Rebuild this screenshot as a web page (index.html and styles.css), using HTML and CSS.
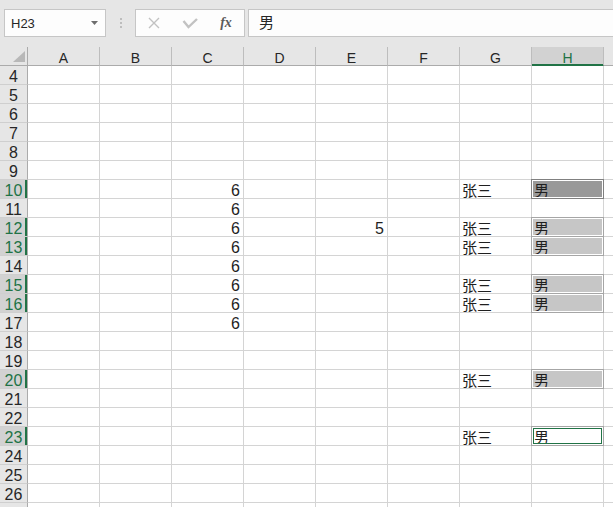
FILE: index.html
```html
<!DOCTYPE html>
<html lang="zh">
  <head>
    <meta charset="UTF-8" />
    <title>Sheet1</title>
    <link rel="stylesheet" href="styles.css">
  </head>
  <body>
    <div class="bar">
      <div class="namebox">
        <span>H23</span>
        <svg class="caret" width="7" height="4"><polygon points="0,0 7,0 3.5,4" /></svg>
      </div>
      <div class="grip"><i></i><i></i><i></i></div>
      <div class="fbtns">
        <span class="slot">
          <svg width="12" height="12"><path d="M1 1 L11 11 M11 1 L1 11" /></svg>
        </span>
        <span class="slot">
          <svg width="16" height="11"><polyline points="1.5,3 6.5,9 15,1" /></svg>
        </span>
        <span class="slot fx">fx</span>
      </div>
      <div class="finput">男</div>
    </div>

    <div class="sheet">
      <div class="row head">
        <div class="corner"><svg width="12" height="11"><polygon points="12,0 12,11 0,11" /></svg></div>
        <div>A</div><div>B</div><div>C</div><div>D</div><div>E</div><div>F</div><div>G</div><div class="on">H</div><div></div>
      </div>
      <div class="row"><div class="rh">4</div><div></div><div></div><div></div><div></div><div></div><div></div><div></div><div></div><div></div></div>
      <div class="row"><div class="rh">5</div><div></div><div></div><div></div><div></div><div></div><div></div><div></div><div></div><div></div></div>
      <div class="row"><div class="rh">6</div><div></div><div></div><div></div><div></div><div></div><div></div><div></div><div></div><div></div></div>
      <div class="row"><div class="rh">7</div><div></div><div></div><div></div><div></div><div></div><div></div><div></div><div></div><div></div></div>
      <div class="row"><div class="rh">8</div><div></div><div></div><div></div><div></div><div></div><div></div><div></div><div></div><div></div></div>
      <div class="row"><div class="rh">9</div><div></div><div></div><div></div><div></div><div></div><div></div><div></div><div></div><div></div></div>
      <div class="row"><div class="rh on">10</div><div></div><div></div><div class="num">6</div><div></div><div></div><div></div><div class="txt">张三</div><div class="txt sel dark">男</div><div></div></div>
      <div class="row"><div class="rh">11</div><div></div><div></div><div class="num">6</div><div></div><div></div><div></div><div></div><div></div><div></div></div>
      <div class="row"><div class="rh on">12</div><div></div><div></div><div class="num">6</div><div></div><div class="num">5</div><div></div><div class="txt">张三</div><div class="txt sel">男</div><div></div></div>
      <div class="row"><div class="rh on">13</div><div></div><div></div><div class="num">6</div><div></div><div></div><div></div><div class="txt">张三</div><div class="txt sel">男</div><div></div></div>
      <div class="row"><div class="rh">14</div><div></div><div></div><div class="num">6</div><div></div><div></div><div></div><div></div><div></div><div></div></div>
      <div class="row"><div class="rh on">15</div><div></div><div></div><div class="num">6</div><div></div><div></div><div></div><div class="txt">张三</div><div class="txt sel">男</div><div></div></div>
      <div class="row"><div class="rh on">16</div><div></div><div></div><div class="num">6</div><div></div><div></div><div></div><div class="txt">张三</div><div class="txt sel">男</div><div></div></div>
      <div class="row"><div class="rh">17</div><div></div><div></div><div class="num">6</div><div></div><div></div><div></div><div></div><div></div><div></div></div>
      <div class="row"><div class="rh">18</div><div></div><div></div><div></div><div></div><div></div><div></div><div></div><div></div><div></div></div>
      <div class="row"><div class="rh">19</div><div></div><div></div><div></div><div></div><div></div><div></div><div></div><div></div><div></div></div>
      <div class="row"><div class="rh on">20</div><div></div><div></div><div></div><div></div><div></div><div></div><div class="txt">张三</div><div class="txt sel">男</div><div></div></div>
      <div class="row"><div class="rh">21</div><div></div><div></div><div></div><div></div><div></div><div></div><div></div><div></div><div></div></div>
      <div class="row"><div class="rh">22</div><div></div><div></div><div></div><div></div><div></div><div></div><div></div><div></div><div></div></div>
      <div class="row"><div class="rh on">23</div><div></div><div></div><div></div><div></div><div></div><div></div><div class="txt">张三</div><div class="txt act">男</div><div></div></div>
      <div class="row"><div class="rh">24</div><div></div><div></div><div></div><div></div><div></div><div></div><div></div><div></div><div></div></div>
      <div class="row"><div class="rh">25</div><div></div><div></div><div></div><div></div><div></div><div></div><div></div><div></div><div></div></div>
      <div class="row"><div class="rh">26</div><div></div><div></div><div></div><div></div><div></div><div></div><div></div><div></div><div></div></div>
      <div class="row"><div class="rh"></div><div></div><div></div><div></div><div></div><div></div><div></div><div></div><div></div><div></div></div>
    </div>
  </body>
</html>
```

FILE: styles.css
```css
body {
  margin: 0;
  width: 613px;
  height: 507px;
  overflow: hidden;
  background-color: #fff;
  font-family: "Liberation Sans", "Noto Sans CJK SC", sans-serif;
  color: #1f1f1f;
}

/* formula bar */
.bar {
  display: flex;
  align-items: flex-start;
  height: 47px;
  box-sizing: border-box;
  padding: 9px 0 0 4px;
  background-color: #e6e6e6;
  overflow: hidden;
}
.namebox {
  display: flex;
  align-items: center;
  justify-content: space-between;
  width: 102px;
  height: 28px;
  box-sizing: border-box;
  padding: 0 7px 0 6px;
  border: 1px solid #c6c6c6;
  background-color: #fdfdfd;
  font-size: 13px;
  color: #262626;
}
.caret polygon {
  fill: #6d6d6d;
}
.grip {
  display: flex;
  flex-direction: column;
  gap: 2px;
  margin: 9px 13px 0 14px;
}
.grip i {
  display: block;
  width: 2px;
  height: 2px;
  background-color: #bdbdbd;
}
.fbtns {
  display: flex;
  width: 110px;
  height: 28px;
  box-sizing: border-box;
  border: 1px solid #c6c6c6;
  background-color: #fdfdfd;
}
.slot {
  display: flex;
  align-items: center;
  justify-content: center;
  width: 36px;
}
.slot path,
.slot polyline {
  fill: none;
  stroke: #c2c2c2;
}
.slot path {
  stroke-width: 1.4;
}
.slot polyline {
  stroke-width: 2.4;
}
.fx {
  font-family: "Liberation Serif", serif;
  font-style: italic;
  font-weight: bold;
  font-size: 14px;
  color: #5b5b5b;
  padding-bottom: 1px;
}
.finput {
  flex: 1;
  height: 28px;
  box-sizing: border-box;
  margin: 0 -4px 0 3px;
  padding-left: 10px;
  border: 1px solid #c6c6c6;
  background-color: #fdfdfd;
  font-size: 15px;
  line-height: 26px;
  color: #262626;
}

/* grid: last column is the sliver of I at the right edge */
.sheet {
  width: 613px;
  overflow: hidden;
}
.row {
  display: grid;
  grid-template-columns: 28px repeat(8, 72px) minmax(0, 1fr);
}
.row > div {
  height: 19px;
  box-sizing: border-box;
  border-right: 1px solid #d4d4d4;
  border-bottom: 1px solid #d4d4d4;
  font-size: 16px;
  line-height: 22px;
  white-space: nowrap;
}
.row > div:last-child {
  border-right: none;
}
.head > div {
  background-color: #e6e6e6;
  border-right-color: #bdbdbd;
  border-bottom-color: #ababab;
  text-align: center;
  font-size: 14px;
  color: #262626;
}
.head > .on {
  background-color: #d2d2d2;
  color: #217346;
  border-bottom-color: #217346;
  box-shadow: inset 0 -1px #217346;
}
.head > .corner {
  display: flex;
  justify-content: flex-end;
  align-items: flex-end;
  padding: 0 2px 3px 0;
  border-right-color: #ababab;
}
.corner polygon {
  fill: #b8b8b8;
}
.row > .rh {
  background-color: #e6e6e6;
  border-right-color: #ababab;
  border-bottom-color: #cfcfcf;
  text-align: center;
  color: #262626;
}
.row > .rh.on {
  background-color: #d2d2d2;
  color: #217346;
  box-shadow: inset -2px 0 #217346;
}
.num {
  text-align: right;
  padding-right: 3px;
}
.row > .txt {
  padding-left: 2px;
  font-size: 15px;
}

/* selected cells */
.sel,
.act {
  position: relative;
}
.sel {
  background-color: #c6c6c6;
}
.sel.dark {
  background-color: #999;
}
.sel::after,
.act::after {
  content: "";
  position: absolute;
  top: -1px;
  left: -1px;
  right: -1px;
  bottom: -1px;
  border: 1px solid #a6a6a6;
  box-shadow: inset 0 0 0 1px #fff;
}
.sel.dark::after {
  border-color: #808080;
}
.act::after {
  box-shadow: inset 0 0 0 1px #fff, inset 0 0 0 2px #217346;
}
```
